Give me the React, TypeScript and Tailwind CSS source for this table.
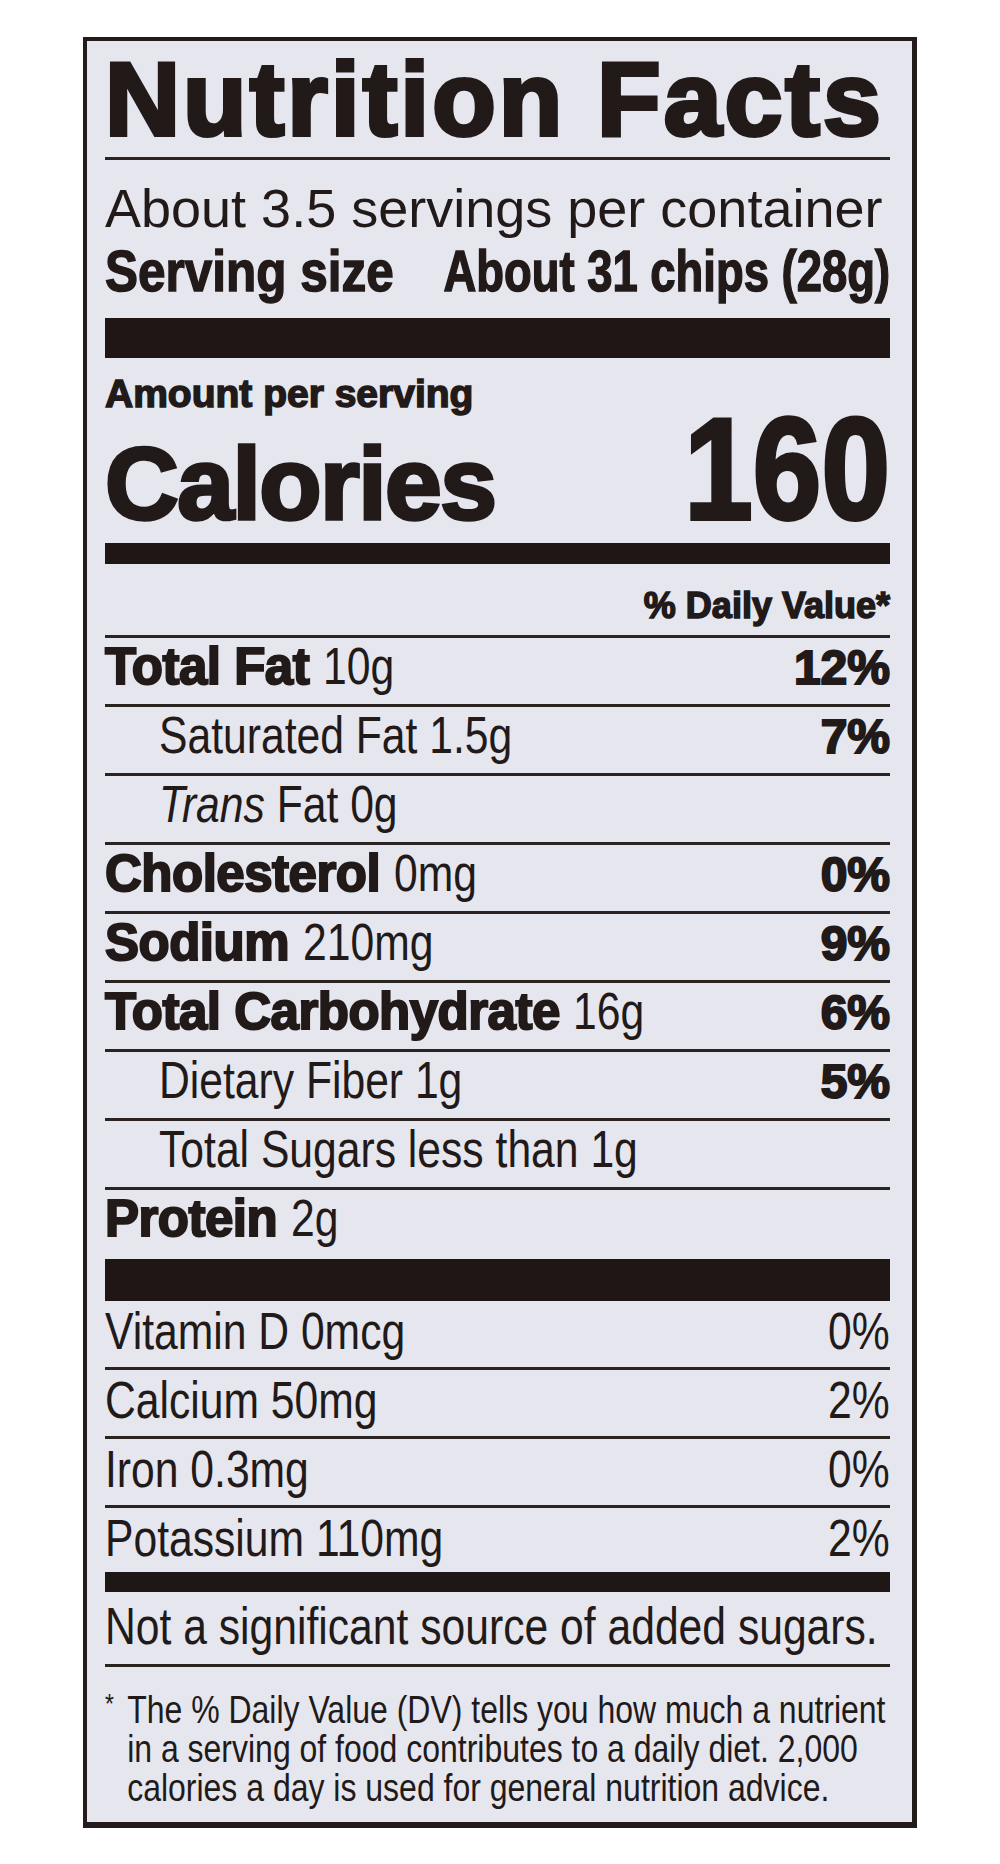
import React from "react";

const HEAVY = "font-['Liberation_Sans',Arial,sans-serif] font-bold";
const REG = "font-['Liberation_Sans',Arial,sans-serif]";

function Line() {
  return <div className="h-[3px] bg-[#2a2322]" />;
}

type RowProps = {
  name?: React.ReactNode;
  amount: React.ReactNode;
  dv?: string;
  indent?: boolean;
  last?: boolean;
};

function Row({ name, amount, dv, indent, last }: RowProps) {
  return (
    <>
      <div
        className={
          indent
            ? "flex h-[66px] items-baseline justify-between pt-[1px] pl-[54px]"
            : "flex h-[66px] items-baseline justify-between pt-[1px]"
        }
      >
        <div className="whitespace-nowrap text-[51px] leading-none">
          {name ? (
            <span className={`${HEAVY} tracking-[-0.5px] [-webkit-text-stroke-width:2px]`}>{name} </span>
          ) : null}
          <span className={`${REG} inline-block origin-left scale-x-[0.82] text-[52px]`}>{amount}</span>
        </div>
        {dv ? (
          <div className={`${HEAVY} text-[48px] leading-none [-webkit-text-stroke-width:2px]`}>{dv}</div>
        ) : null}
      </div>
      {last ? null : <Line />}
    </>
  );
}

function MicroRow({ label, dv, short }: { label: string; dv: string; short?: boolean }) {
  return (
    <div className={short ? "h-[64px] pt-[4px]" : "h-[66px] pt-[4px]"}>
      <div
        className={`${REG} flex w-[957px] origin-left scale-x-[0.82] items-baseline justify-between whitespace-nowrap text-[52px] leading-none`}
      >
        <span>{label}</span>
        <span>{dv}</span>
      </div>
    </div>
  );
}

export default function App() {
  return (
    <div className="min-h-[1864px] w-[1000px] overflow-hidden bg-white pt-[37px] pl-[83px]">
      <div className="w-[834px] border-t-4 border-r-[5px] border-b-[6px] border-l-4 border-[#231c1b] bg-[#e6e6ef] pr-[22px] pl-[18px] text-[#211a19]">
        {/* Title */}
        <div
          className={`${HEAVY} whitespace-nowrap pt-[6px] text-[104px] leading-none tracking-[3px] [-webkit-text-stroke-width:4px]`}
        >
          Nutrition Facts
        </div>
        <div className="mt-[6px]">
          <Line />
        </div>
        <div className={`${REG} mt-[21px] whitespace-nowrap text-[54px] leading-none`}>
          About 3.5 servings per container
        </div>
        <div className="mt-[7px]">
          <div
            className={`${HEAVY} flex w-[957px] origin-left scale-x-[0.82] justify-between whitespace-nowrap text-[58px] leading-none [-webkit-text-stroke-width:1.5px]`}
          >
            <span className="inline-block origin-left scale-x-[1.04]">Serving size</span>
            <span className="inline-block origin-right scale-x-[0.955]">About 31 chips (28g)</span>
          </div>
        </div>
        <div className="mt-[18px] h-[40px] bg-[#1f1716]" />

        {/* Calories */}
        <div className="flex items-end justify-between">
          <div>
            <div className={`${HEAVY} mt-[16px] whitespace-nowrap text-[39px] leading-none [-webkit-text-stroke-width:1.5px]`}>
              Amount per serving
            </div>
            <div
              className={`${HEAVY} mt-[20px] whitespace-nowrap text-[102px] leading-none tracking-[-1.5px] [-webkit-text-stroke-width:3.5px]`}
            >
              Calories
            </div>
          </div>
          <div
            className={`${HEAVY} origin-right scale-x-[0.85] text-[145px] leading-[132px] [-webkit-text-stroke-width:4px]`}
          >
            160
          </div>
        </div>
        <div className="mt-[8px] h-[21px] bg-[#1f1716]" />

        <div className={`${HEAVY} mt-[24px] text-right text-[36px] leading-none [-webkit-text-stroke-width:1.5px]`}>
          % Daily Value*
        </div>
        <div className="mt-[11px]">
          <Line />
        </div>

        <Row name="Total Fat" amount="10g" dv="12%" />
        <Row amount="Saturated Fat 1.5g" dv="7%" indent />
        <Row
          amount={
            <>
              <i>Trans</i> Fat 0g
            </>
          }
          indent
        />
        <Row name="Cholesterol" amount="0mg" dv="0%" />
        <Row name="Sodium" amount="210mg" dv="9%" />
        <Row name="Total Carbohydrate" amount="16g" dv="6%" />
        <Row amount="Dietary Fiber 1g" dv="5%" indent />
        <Row amount="Total Sugars less than 1g" indent />
        <Row name="Protein" amount="2g" last />

        <div className="mt-[3px] h-[42px] bg-[#1f1716]" />

        <MicroRow label="Vitamin D 0mcg" dv="0%" />
        <Line />
        <MicroRow label="Calcium 50mg" dv="2%" />
        <Line />
        <MicroRow label="Iron 0.3mg" dv="0%" />
        <Line />
        <MicroRow label="Potassium 110mg" dv="2%" short />
        <div className="h-[20px] bg-[#1f1716]" />

        <div className="mt-[8px]">
          <div className={`${REG} w-[957px] origin-left scale-x-[0.82] whitespace-nowrap text-[52px] leading-none`}>
            Not a significant source of added sugars.
          </div>
        </div>
        <div className="mt-[12px]">
          <Line />
        </div>

        <div className="mt-[23px] pb-[15px]">
          <div className={`${REG} flex w-[957px] origin-left scale-x-[0.82] text-[39px] leading-[39px]`}>
            <span className="w-[27px] shrink-0 text-[28px] leading-[28px]">*</span>
            <div className="whitespace-nowrap">
              The % Daily Value (DV) tells you how much a nutrient
              <br />
              in a serving of food contributes to a daily diet. 2,000
              <br />
              calories a day is used for general nutrition advice.
            </div>
          </div>
        </div>
      </div>
    </div>
  );
}
